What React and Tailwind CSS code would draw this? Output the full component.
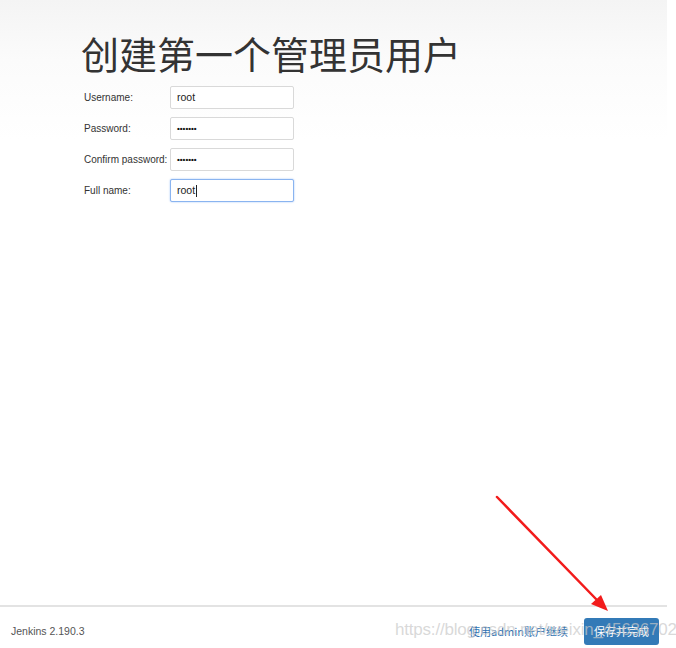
export default function App() {
  const rows = [
    { label: "Username:", value: "root", type: "text" },
    { label: "Password:", value: "•••••••", type: "pw" },
    { label: "Confirm password:", value: "•••••••", type: "pw" },
    { label: "Full name:", value: "root", type: "focus" },
  ];
  return (
    <div className="relative w-[676px] h-[648px] bg-white overflow-hidden" style={{ fontFamily: '"Liberation Sans", "Noto Sans CJK SC", sans-serif' }}>
      <div className="w-[667px] h-full flex flex-col">
        <div className="h-[605px] bg-[linear-gradient(to_bottom,#f4f4f4_0px,#fbfbfb_60px,#ffffff_140px)] pl-[81px] pt-[29px]">
          <h1 className="text-[38px] leading-[47px] text-[#333] font-normal" style={{ fontFamily: '"Noto Sans CJK SC", sans-serif' }}>创建第一个管理员用户</h1>
          <div className="mt-[10px] flex flex-col gap-[8px] pl-[3px]">
            {rows.map((r) => (
              <div key={r.label} className="flex items-center h-[23px]">
                <div className="w-[86px] text-[10px] text-[#333] whitespace-nowrap">{r.label}</div>
                <div className={`w-[124px] h-[23px] bg-white rounded-[2px] flex items-center pl-[6px] text-[10.5px] text-[#222] ${r.type === "focus" ? "border border-[#8ab4f0] shadow-[0_0_2px_#9ec0f5]" : "border border-[#d9d9d9]"}`}>
                  {r.type === "pw" ? <span className="text-[8px] tracking-[0px] font-bold text-[#111]">{r.value}</span> : <span>{r.value}</span>}
                  {r.type === "focus" && <span className="w-px h-[12px] bg-[#222] ml-[1px]" />}
                </div>
              </div>
            ))}
          </div>
        </div>
        <div className="h-[2px] bg-[#e3e3e3]" />
        <div className="flex-1 flex items-center pl-[11px] pr-[8px] pt-[8px]">
          <span className="text-[10.5px] text-[#555]">Jenkins 2.190.3</span>
          <div className="ml-auto flex items-center gap-[16px]">
            <span className="text-[11px] text-[#2d6fb0]" style={{ fontFamily: '"Noto Sans CJK SC", sans-serif' }}>使用admin账户继续</span>
            <div className="w-[75px] h-[27px] rounded-[3px] bg-[#337ab7] flex items-center justify-center text-[11px] text-white" style={{ fontFamily: '"Noto Sans CJK SC", sans-serif' }}>保存并完成</div>
          </div>
        </div>
      </div>
      <div className="absolute left-[395px] top-[620px] text-[17px] leading-[20px] text-[#c8c8c8]/70 whitespace-nowrap tracking-[-0.2px]" style={{ fontFamily: '"Liberation Sans", sans-serif' }}>https://blog.csdn.net/weixin_45636702</div>
      <svg className="absolute left-0 top-0" width="676" height="648" viewBox="0 0 676 648">
        <line x1="497" y1="497" x2="596" y2="599" stroke="#f21b1b" strokeWidth="2.5" strokeLinecap="round" />
        <polygon points="608,611 591,604 601,595" fill="#f21b1b" />
      </svg>
    </div>
  );
}
